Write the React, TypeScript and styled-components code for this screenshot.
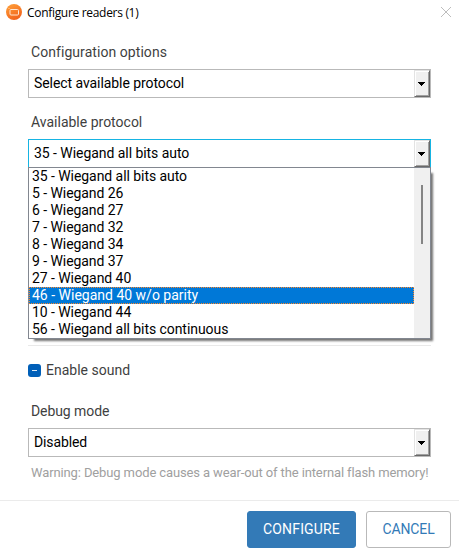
import React from "react";
import styled, { createGlobalStyle, css } from "styled-components";

const GlobalStyle = createGlobalStyle`
  * { box-sizing: border-box; }
  html, body { margin: 0; padding: 0; background: #fff; }
  body { font-family: Roboto, "Liberation Sans", sans-serif; font-size: 14px; color: #3f3f3f; }
`;

const Dialog = styled.div`
  width: 459px;
  height: 555px;
  background: #fff;
  display: flex;
  flex-direction: column;
  overflow: hidden;
`;

const TitleBar = styled.header`
  height: 25px;
  flex: none;
  display: flex;
  align-items: center;
  padding: 0 7px 1px 6px;
  font-family: "Open Sans", "Noto Sans", sans-serif;
  font-size: 12px;
  color: #000;
`;

const Title = styled.span`
  margin-left: 5px;
  flex: 1;
  white-space: nowrap;
  letter-spacing: -0.31px;
`;

const CloseButton = styled.button`
  border: 0;
  padding: 0;
  background: none;
  width: 12px;
  height: 12px;
  display: flex;
  align-items: center;
  justify-content: center;
`;

const Body = styled.main`
  flex: none;
  height: 475px;
  padding: 17px 28px 0;
  display: flex;
  flex-direction: column;
`;

const Label = styled.label<{ $spacing?: number }>`
  height: 20px;
  flex: none;
  line-height: 20px;
  padding-left: 3px;
  margin-bottom: 7px;
  white-space: nowrap;
  letter-spacing: ${(p) => p.$spacing ?? 0}px;
`;

const Field = styled.div<{ $gap: number }>`
  position: relative;
  display: flex;
  flex-direction: column;
  flex: none;
  margin-bottom: ${(p) => p.$gap}px;
`;

const Select = styled.div<{ $active?: boolean; $spacing?: number }>`
  height: 29px;
  display: flex;
  justify-content: space-between;
  border: 1px solid ${(p) => (p.$active ? "#16b4e3" : "#b9b9b9")};
  line-height: 27px;
  padding-left: 5px;
  color: #000;
  letter-spacing: ${(p) => p.$spacing ?? 0}px;
`;

const ArrowButton = styled.span`
  width: 16px;
  height: 27px;
  background: #f0f0f0;
  border: 1px solid;
  border-color: #e3e3e3 #696969 #696969 #e3e3e3;
  box-shadow: inset 1px 1px #fff, inset -1px -1px #a0a0a0;
  display: flex;
  align-items: center;
  padding-left: 3px;
`;

const List = styled.div`
  position: absolute;
  top: 55px;
  left: 0;
  z-index: 2;
  width: 403px;
  height: 172px;
  display: flex;
  background: #fff;
  border: 1px solid #828790;
  box-shadow: 4px 4px 2px -2px rgba(0, 0, 0, 0.55);
`;

const Options = styled.ul`
  flex: 1;
  margin: 0;
  padding: 0;
  list-style: none;
`;

const Option = styled.li<{ $selected: boolean }>`
  height: 17px;
  line-height: 17px;
  padding-left: 3px;
  color: #000;
  white-space: nowrap;
  letter-spacing: -0.06px;
  ${(p) =>
    p.$selected &&
    css`
      background: #0078d7;
      color: #fff;
      letter-spacing: 0;
      outline: 1px dotted #ff8728;
      outline-offset: -1px;
    `}
`;

const ScrollTrack = styled.div`
  width: 16px;
  background: #f0f0f0;
  padding: 17px 0 0 7px;
`;

const ScrollThumb = styled.div`
  width: 2px;
  height: 59px;
  background: #858585;
`;

const Separator = styled.div`
  height: 1px;
  flex: none;
  background: #e9e9e9;
  margin-top: 177px;
`;

const CheckRow = styled.div`
  height: 20px;
  flex: none;
  display: flex;
  align-items: center;
  gap: 5px;
  margin: 14px 0 21px;
`;

const CheckBox = styled.span`
  width: 13px;
  height: 13px;
  border-radius: 3px;
  background: #005fb8;
  display: flex;
  align-items: center;
  justify-content: center;
  &::after {
    content: "";
    width: 5px;
    height: 1px;
    background: #dbe9f5;
  }
`;

const Warning = styled.p`
  margin: 6px 0 0 3px;
  line-height: 20px;
  font-size: 13px;
  letter-spacing: -0.12px;
  color: #a0a0a0;
  white-space: nowrap;
`;

const Footer = styled.footer`
  height: 55px;
  flex: none;
  border-top: 1px solid #ebebeb;
  padding: 10px 8px 0 0;
  display: flex;
  justify-content: flex-end;
  gap: 10px;
`;

const Button = styled.button<{ $primary?: boolean }>`
  width: ${(p) => (p.$primary ? 109 : 85)}px;
  height: 37px;
  padding: 0 0 2px;
  border-radius: 3px;
  border: 1px solid ${(p) => (p.$primary ? "#337ab7" : "#b9b9b9")};
  background: ${(p) => (p.$primary ? "#337ab7" : "#fff")};
  color: ${(p) => (p.$primary ? "#fff" : "#337ab7")};
  font: 14px Roboto, sans-serif;
  letter-spacing: ${(p) => (p.$primary ? 0.15 : -0.1)}px;
`;

const AppLogo = () => (
  <svg width="16" height="16" viewBox="0 0 16 16">
    <defs>
      <linearGradient id="logo" x1="0" y1="0" x2="0.5" y2="1">
        <stop offset="0" stopColor="#ffa23a" />
        <stop offset="1" stopColor="#f2641c" />
      </linearGradient>
    </defs>
    <circle cx="8" cy="8" r="8" fill="url(#logo)" />
    <rect x="4" y="5.5" width="8.5" height="5.5" rx="1" fill="none" stroke="#ffe6d2" />
    <path d="M2.5 4.5h1" stroke="#ffd2a5" />
  </svg>
);

const Arrow = () => (
  <svg width="7" height="4" viewBox="0 0 7 4" shapeRendering="crispEdges">
    <path d="M0 0h7v1H0zM1 1h5v1H1zM2 2h3v1H2zM3 3h1v1H3z" fill="#000" />
  </svg>
);

const options = [
  "35 - Wiegand all bits auto",
  "5 - Wiegand 26",
  "6 - Wiegand 27",
  "7 - Wiegand 32",
  "8 - Wiegand 34",
  "9 - Wiegand 37",
  "27 - Wiegand 40",
  "46 - Wiegand 40 w/o parity",
  "10 - Wiegand 44",
  "56 - Wiegand all bits continuous",
];

const Combo = ({ value, active, spacing }: { value: string; active?: boolean; spacing?: number }) => (
  <Select $active={active} $spacing={spacing}>
    <span>{value}</span>
    <ArrowButton>
      <Arrow />
    </ArrowButton>
  </Select>
);

export default function App() {
  return (
    <>
      <GlobalStyle />
      <Dialog>
        <TitleBar>
          <AppLogo />
          <Title>Configure readers (1)</Title>
          <CloseButton aria-label="Close">
            <svg width="10" height="10" viewBox="0 0 10 10">
              <path d="M0 0l10 10M10 0L0 10" stroke="#bdbdbd" />
            </svg>
          </CloseButton>
        </TitleBar>
        <Body>
          <Field $gap={14}>
            <Label $spacing={0.06}>Configuration options</Label>
            <Combo value="Select available protocol" spacing={-0.07} />
          </Field>
          <Field $gap={0}>
            <Label>Available protocol</Label>
            <Combo value="35 - Wiegand all bits auto" active spacing={-0.05} />
            <List>
              <Options>
                {options.map((o) => (
                  <Option key={o} $selected={o.startsWith("46")}>
                    {o}
                  </Option>
                ))}
              </Options>
              <ScrollTrack>
                <ScrollThumb />
              </ScrollTrack>
            </List>
          </Field>
          <Separator />
          <CheckRow>
            <CheckBox />
            <span>Enable sound</span>
          </CheckRow>
          <Field $gap={0}>
            <Label $spacing={-0.08}>Debug mode</Label>
            <Combo value="Disabled" spacing={-0.12} />
          </Field>
          <Warning>Warning: Debug mode causes a wear-out of the internal flash memory!</Warning>
        </Body>
        <Footer>
          <Button $primary>CONFIGURE</Button>
          <Button>CANCEL</Button>
        </Footer>
      </Dialog>
    </>
  );
}
